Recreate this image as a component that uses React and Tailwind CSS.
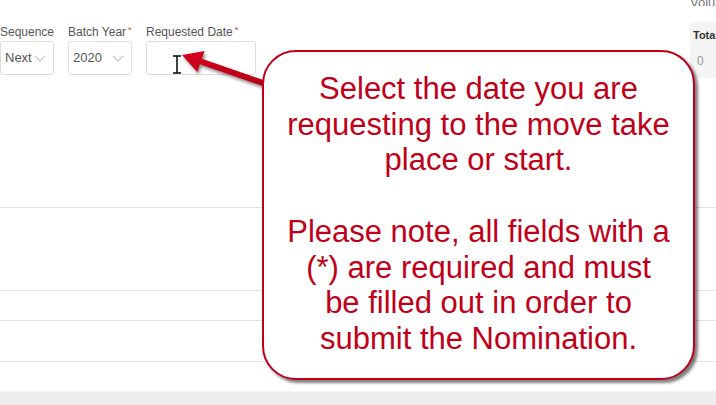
import React from "react";

function Chevron() {
  return (
    <svg width="12" height="7" viewBox="0 0 12 7" className="shrink-0">
      <polyline points="1,1 6,6 11,1" fill="none" stroke="#c8c8c8" strokeWidth="1.1" />
    </svg>
  );
}

function Label({ children, required }) {
  return (
    <div className="h-[14px] text-[12px] leading-[14px] text-[#555] whitespace-nowrap">
      {children}
      {required && <span className="text-[#d9363e] text-[9px] align-top ml-[2px] leading-[10px]">*</span>}
    </div>
  );
}

export default function App() {
  return (
    <div className="relative w-[716px] h-[405px] overflow-hidden bg-white font-['Liberation_Sans',Arial,sans-serif]">
      <div className="h-[208px] border-b border-[#e2e2e2] flex justify-between">
        <div className="flex gap-[14px] pt-[25px]">
          <div className="flex flex-col gap-[2px] w-[54px]">
            <Label>Sequence</Label>
            <div className="h-[34px] border border-[#dddddd] rounded-[3px] flex items-center justify-between pl-[4px] pr-[7px]">
              <span className="text-[13px] text-[#555]">Next</span>
              <Chevron />
            </div>
          </div>
          <div className="flex flex-col gap-[2px] w-[64px]">
            <Label required>Batch Year</Label>
            <div className="h-[34px] border border-[#dddddd] rounded-[3px] flex items-center justify-between pl-[4px] pr-[7px]">
              <span className="text-[13px] text-[#555]">2020</span>
              <Chevron />
            </div>
          </div>
          <div className="flex flex-col gap-[2px] w-[110px]">
            <Label required>Requested Date</Label>
            <div className="h-[34px] border border-[#dddddd] rounded-[3px]" />
          </div>
        </div>
        <div className="w-[26px] flex flex-col">
          <div className="h-[10px] -mt-[4px] text-[13px] leading-[14px] text-[#777] whitespace-nowrap overflow-hidden">Volume</div>
          <div className="mt-[16px] h-[56px] bg-[#f4f4f4] pl-[3px] pt-[7px] overflow-hidden">
            <div className="text-[11px] font-bold text-[#333] leading-[13px] whitespace-nowrap">Total</div>
            <div className="mt-[12px] text-[12px] text-[#999] leading-[14px] pl-[4px]">0</div>
          </div>
        </div>
      </div>
      <div className="h-[83px] border-b border-[#e2e2e2]" />
      <div className="h-[30px] border-b border-[#e2e2e2]" />
      <div className="h-[41px] border-b border-[#e2e2e2]" />
      <div className="h-[29px]" />
      <div className="h-[14px] bg-[#ececec] border-t border-[#f3f3f3]" />

      {/* text cursor */}
      <svg className="absolute left-[170px] top-[54px]" width="14" height="22" viewBox="0 0 14 22">
        <g stroke="#111" strokeWidth="1.6" fill="none">
          <line x1="7" y1="2" x2="7" y2="19" />
          <line x1="3" y1="2" x2="11" y2="2" />
          <line x1="3" y1="19" x2="11" y2="19" />
        </g>
      </svg>

      {/* arrow */}
      <svg className="absolute left-0 top-0" width="716" height="405" viewBox="0 0 716 405">
        <defs>
          <filter id="ash" x="-20%" y="-20%" width="140%" height="160%">
            <feDropShadow dx="1.5" dy="2.5" stdDeviation="1.5" floodColor="#000" floodOpacity="0.45" />
          </filter>
          <linearGradient id="ag" x1="0" y1="0" x2="0" y2="1">
            <stop offset="0" stopColor="#d8001f" />
            <stop offset="1" stopColor="#b00016" />
          </linearGradient>
        </defs>
        <polygon
          filter="url(#ash)"
          fill="url(#ag)"
          points="182,55 204.5,51.1 201.9,58.7 267,81.2 265,86.8 199.9,64.3 197.3,71.9"
        />
      </svg>

      {/* callout */}
      <div className="absolute left-[262px] top-[50px] w-[433px] h-[330px] rounded-[34px] border-2 border-[#c0001a] bg-white shadow-[3px_3px_3px_rgba(0,0,0,0.5)] pt-[19px] text-center text-[31px] leading-[35.7px] text-[#c00018]">
        <div>Select the date you are</div>
        <div>requesting to the move take</div>
        <div>place or start.</div>
        <div>&nbsp;</div>
        <div>Please note, all fields with a</div>
        <div>(*) are required and must</div>
        <div>be filled out in order to</div>
        <div>submit the Nomination.</div>
      </div>
    </div>
  );
}
